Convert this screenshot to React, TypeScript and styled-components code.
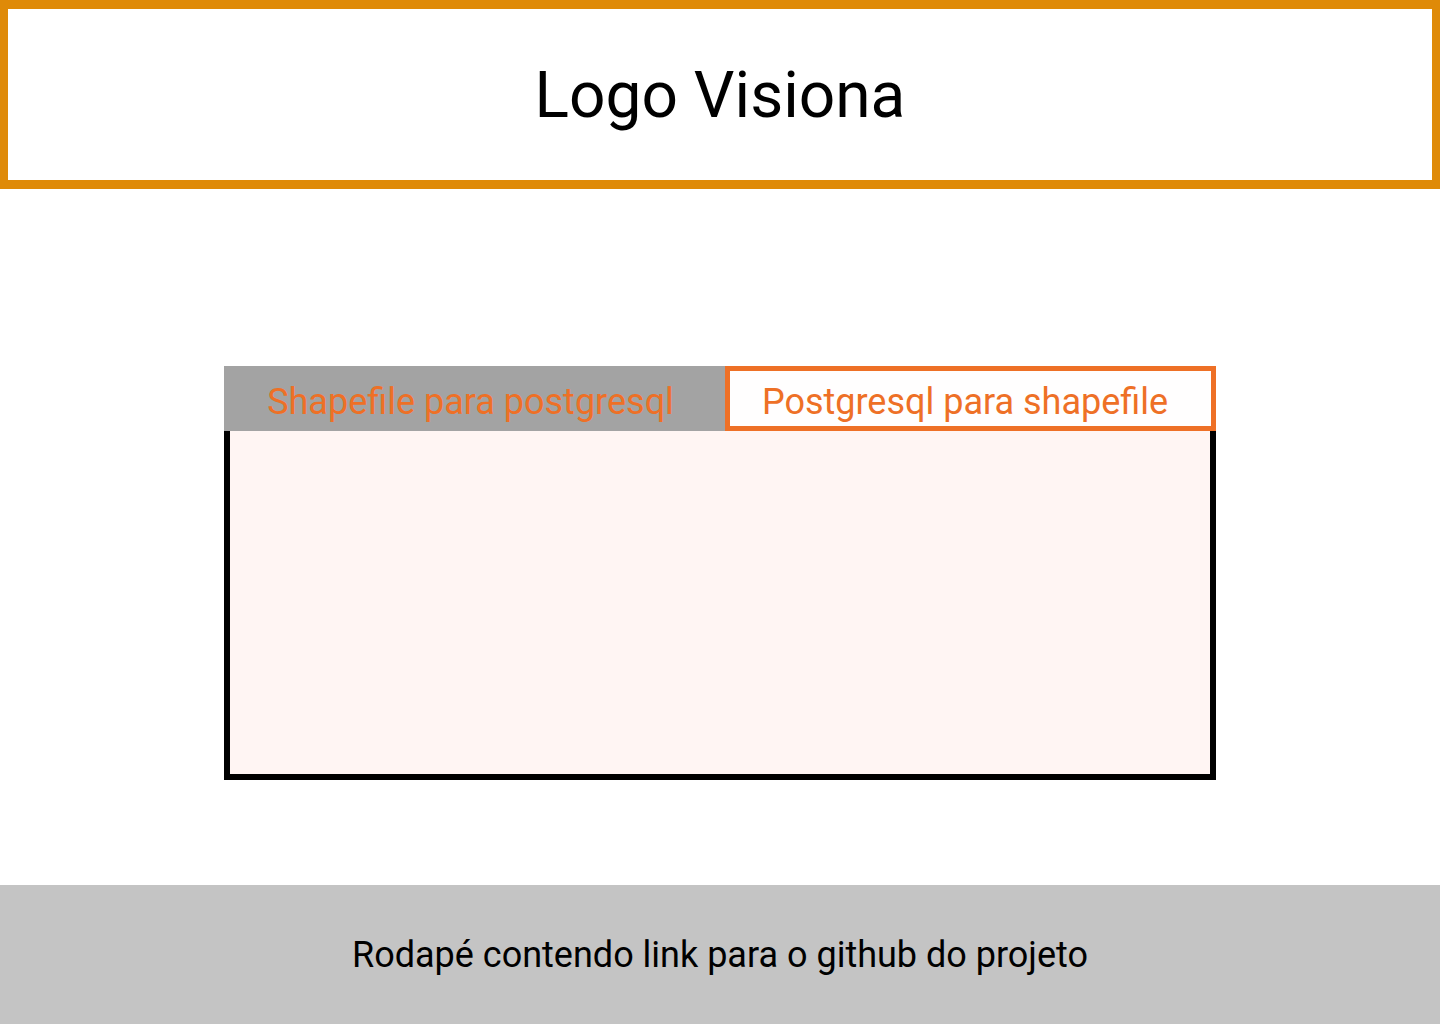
import React, { useState } from "react";
import styled, { createGlobalStyle } from "styled-components";

const GlobalStyle = createGlobalStyle`
  * { box-sizing: border-box; }
  body {
    margin: 0;
    font-family: Roboto, "Liberation Sans", sans-serif;
    background: #fff;
  }
`;

const tabs = ["Shapefile para postgresql", "Postgresql para shapefile"];

const App = () => {
  const [active, setActive] = useState(1);
  return (
    <Page>
      <GlobalStyle />
      <Header>
        <LogoText>Logo Visiona</LogoText>
      </Header>
      <Main>
        <Panel>
          <TabBar>
            {tabs.map((t, i) => (
              <Tab
                key={t}
                $active={active === i}
                $wide={i === 0}
                onClick={() => setActive(i)}
              >
                {t}
              </Tab>
            ))}
          </TabBar>
          <Content />
        </Panel>
      </Main>
      <Footer>Rodapé contendo link para o github do projeto</Footer>
    </Page>
  );
};

const Page = styled.div`
  display: flex;
  flex-direction: column;
  min-height: 1024px;
`;

const Header = styled.header`
  height: 189px;
  border: 9px solid #df8a08;
  border-left-width: 8px;
  border-right-width: 8px;
  display: flex;
  align-items: center;
  justify-content: center;
`;

const LogoText = styled.h1`
  margin: 0;
  font-size: 64px;
  font-weight: 400;
  color: #000;
  padding-top: 1px;
`;

const Main = styled.main`
  flex: 1;
  display: flex;
  justify-content: center;
  padding-top: 177px;
`;

const Panel = styled.section`
  width: 992px;
  display: flex;
  flex-direction: column;
`;

const TabBar = styled.div`
  display: flex;
  height: 65px;
`;

const Tab = styled.button<{ $active: boolean; $wide: boolean }>`
  width: ${(p) => (p.$wide ? "501px" : "491px")};
  height: 65px;
  margin: 0;
  padding: 6px 0 0;
  font-family: Roboto, "Liberation Sans", sans-serif;
  font-size: 36px;
  color: #ee7026;
  cursor: pointer;
  background: ${(p) => (p.$active ? "#fffefe" : "#a3a3a3")};
  border: ${(p) => (p.$active ? "5px solid #ee7026" : "none")};
  padding-right: ${(p) => (p.$active ? "11px" : "8px")};
`;

const Content = styled.div`
  height: 349px;
  background: #fff5f3;
  border: 6px solid #000;
  border-top: none;
`;

const Footer = styled.footer`
  height: 139px;
  background: #c4c4c4;
  display: flex;
  align-items: center;
  justify-content: center;
  font-size: 36px;
  color: #000;
`;

export default App;
